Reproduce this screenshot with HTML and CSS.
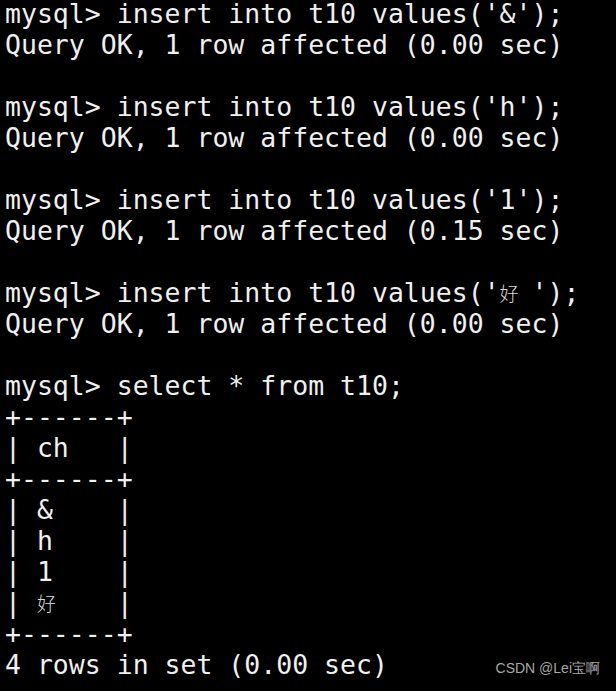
FILE: index.html
```html
<!DOCTYPE html>
<html>
<head>
<meta charset="utf-8">
<link rel="stylesheet" href="styles.css">
</head>
<body>
<div class="term">
<pre class="out">mysql&gt; insert into t10 values('&amp;');
Query OK, 1 row affected (0.00 sec)

mysql&gt; insert into t10 values('h');
Query OK, 1 row affected (0.00 sec)

mysql&gt; insert into t10 values('1');
Query OK, 1 row affected (0.15 sec)

mysql&gt; insert into t10 values('<span class="cjk">好</span>');
Query OK, 1 row affected (0.00 sec)

mysql&gt; select * from t10;
+------+
| ch   |
+------+
| &amp;    |
| h    |
| 1    |
| <span class="cjk">好</span>   |
+------+
4 rows in set (0.00 sec)</pre>
<div class="mark">CSDN @Lei宝啊</div>
</div>
</body>
</html>
```
FILE: styles.css
```css
html, body {
  margin: 0;
  padding: 0;
  background: #000;
}
.term {
  width: 616px;
  height: 691px;
  background: #000;
  overflow: hidden;
  position: relative;
}
.out {
  margin: -2px 0 0 0;
  padding: 0 0 0 5px;
  font-family: "DejaVu Sans Mono", monospace;
  font-size: 26.5px;
  line-height: 31px;
  color: #f0f0f0;
  white-space: pre;
}
.cjk {
  display: inline-block;
  width: 31.9px;
  height: 20px;
  font-family: "Noto Sans CJK SC", sans-serif;
  font-size: 19px;
  font-weight: 300;
  color: #d8d8d8;
  text-align: left;
  line-height: 20px;
  vertical-align: baseline;
  position: relative;
  top: -1px;
}
.mark {
  position: absolute;
  right: 16px;
  bottom: 13px;
  font-family: "Liberation Sans", Arial, sans-serif;
  font-size: 14px;
  color: #a8a8a8;
}
```
